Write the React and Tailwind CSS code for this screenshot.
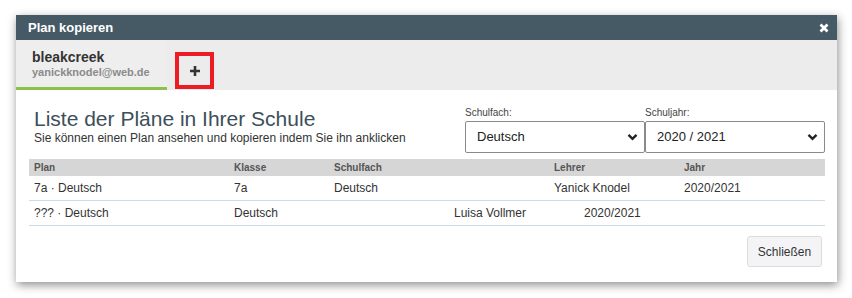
const Chevron = () => (
  <svg width="11" height="8" viewBox="0 0 11 8" className="shrink-0">
    <path d="M1.5 1.8 L5.5 5.8 L9.5 1.8" fill="none" stroke="#222" strokeWidth="2.4" />
  </svg>
);

const FakeSelect = ({ label, value, className = "" }) => (
  <div className={"flex flex-col " + className}>
    <span className="text-[10px] leading-[12px] text-[#444] mb-[2px]">{label}</span>
    <div className="h-[32px] border border-[#8a8a8a] rounded-[2px] bg-white flex items-center justify-between pl-[11px] pr-[6px]">
      <span className="text-[13px] text-[#222]">{value}</span>
      <Chevron />
    </div>
  </div>
);

const App = () => {
  return (
    <div className="w-[852px] h-[298px] bg-white pt-[15px] pl-[16px] font-['Liberation_Sans',Arial,sans-serif]">
      <div className="w-[821px] h-[267px] bg-white flex flex-col shadow-[1px_3px_9px_rgba(0,0,0,0.45)]">
        {/* title bar */}
        <div className="h-[25px] bg-[#455a64] flex items-center justify-between pl-[12px] pr-[8px]">
          <span className="text-white text-[13px] font-bold">Plan kopieren</span>
          <svg width="10" height="10" viewBox="0 0 10 10">
            <path d="M1.5 1.5 L8.5 8.5 M8.5 1.5 L1.5 8.5" stroke="#fff" strokeWidth="2.8" />
          </svg>
        </div>

        {/* tabs */}
        <div className="h-[50px] bg-[#ececec] flex items-start">
          <div className="w-[151px] h-full bg-[#eeeeee] border-b-[3px] border-[#8bc34a] pl-[16px] pt-[9px]">
            <div className="text-[14px] font-bold text-[#333] leading-[17px]">bleakcreek</div>
            <div className="text-[11px] font-bold text-[#8a8a8a] leading-[13px]">yanickknodel@web.de</div>
          </div>
          <div className="ml-[8px] mt-[12px] w-[39px] h-[37px] border-4 border-[#ed1c24] flex items-center justify-center pt-[1px]">
            <svg width="12" height="12" viewBox="0 0 12 12">
              <path d="M6 1 V11 M1 6 H11" stroke="#333" strokeWidth="2.6" />
            </svg>
          </div>
        </div>

        {/* body */}
        <div className="flex-1 flex flex-col pl-[13px] pr-[12px]">
          <div className="flex justify-between h-[69px]">
            <div className="pl-[5px] pt-[16px]">
              <div className="text-[21px] leading-[25px] text-[#3d4f5a]">Liste der Pläne in Ihrer Schule</div>
              <div className="text-[12px] leading-[15px] text-[#333]">Sie können einen Plan ansehen und kopieren indem Sie ihn anklicken</div>
            </div>
            <div className="flex pt-[17px]">
              <FakeSelect label="Schulfach:" value="Deutsch" className="w-[180px]" />
              <FakeSelect label="Schuljahr:" value="2020 / 2021" className="w-[180px]" />
            </div>
          </div>

          <div className="text-[12px] text-[#333]">
            <div className="grid grid-cols-[200px_100px_220px_130px_1fr] h-[17px] items-center bg-[#d6d6d6] text-[10px] font-bold text-[#555]">
              <span className="pl-[5px]">Plan</span>
              <span className="pl-[5px]">Klasse</span>
              <span className="pl-[5px]">Schulfach</span>
              <span className="pl-[5px]">Lehrer</span>
              <span className="pl-[5px]">Jahr</span>
            </div>
            <div className="grid grid-cols-[200px_100px_220px_130px_1fr] h-[25px] items-center border-b border-[#c9dbe6]">
              <span className="pl-[5px]">7a · Deutsch</span>
              <span className="pl-[5px]">7a</span>
              <span className="pl-[5px]">Deutsch</span>
              <span className="pl-[5px]">Yanick Knodel</span>
              <span className="pl-[5px]">2020/2021</span>
            </div>
            <div className="grid grid-cols-[200px_220px_130px_1fr] h-[25px] items-center border-b border-[#c9dbe6]">
              <span className="pl-[5px]">??? · Deutsch</span>
              <span className="pl-[5px]">Deutsch</span>
              <span className="pl-[5px]">Luisa Vollmer</span>
              <span className="pl-[5px]">2020/2021</span>
            </div>
          </div>

          <div className="flex justify-end mt-[10px] pr-[3px]">
            <button className="w-[75px] h-[31px] bg-[#f4f4f7] border border-[#dcdcdc] rounded-[3px] text-[12px] text-[#333]">
              Schließen
            </button>
          </div>
        </div>
      </div>
    </div>
  );
};

export default App;
